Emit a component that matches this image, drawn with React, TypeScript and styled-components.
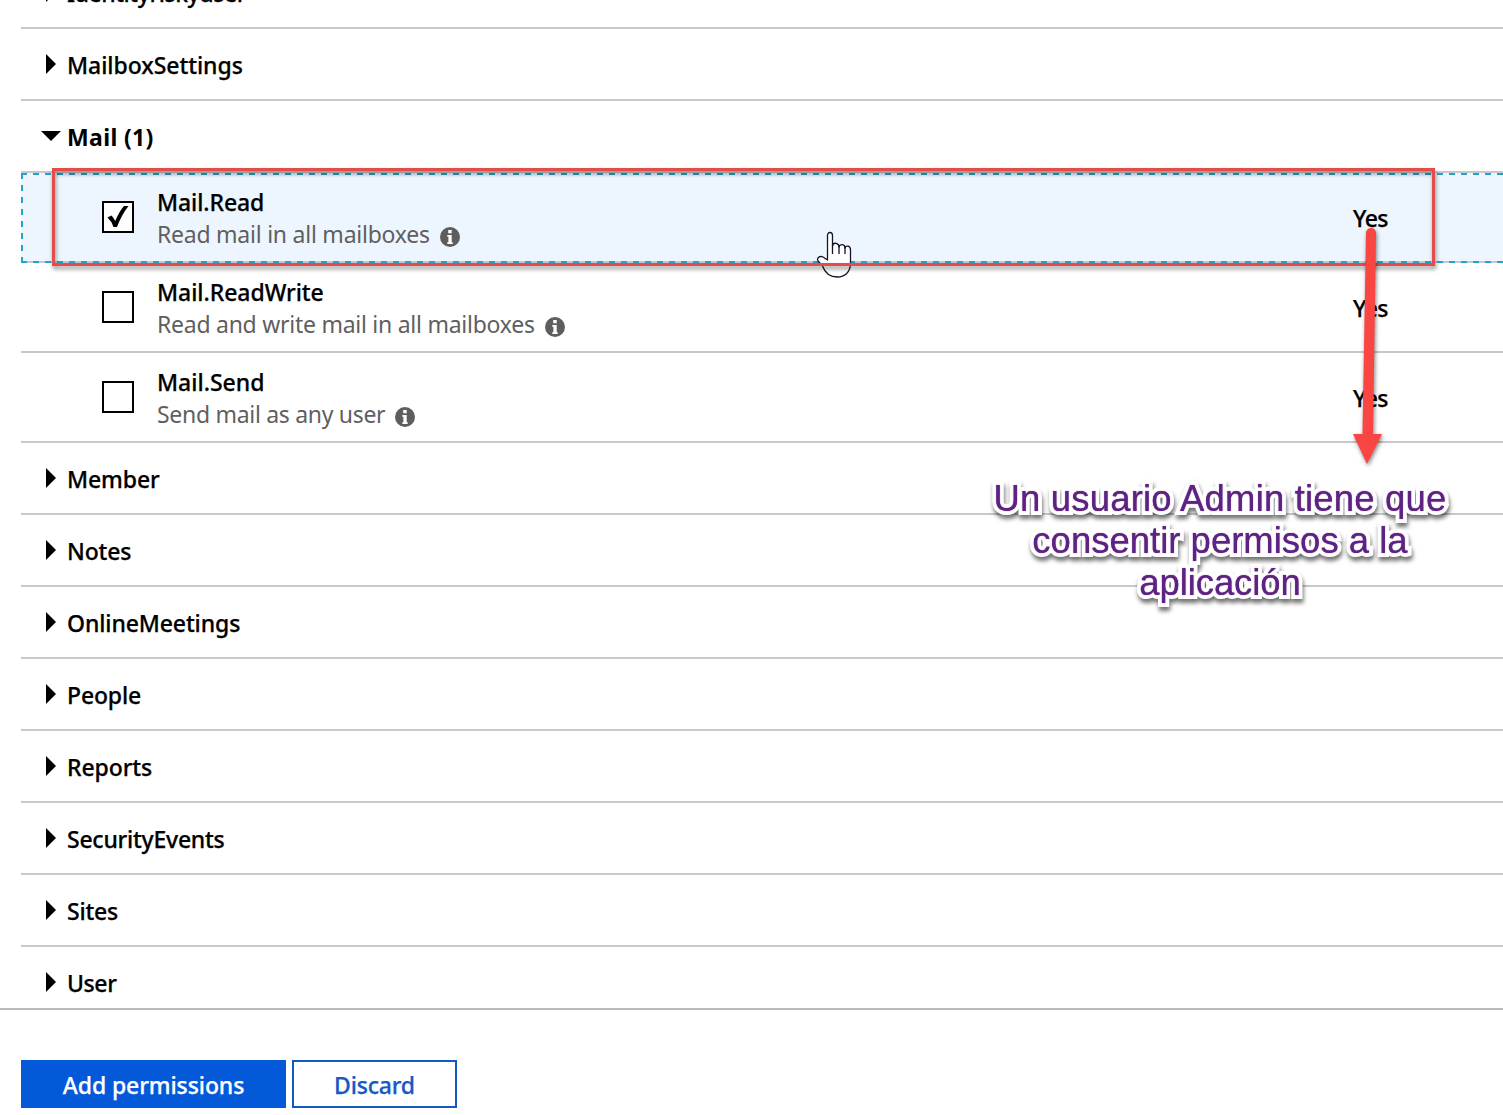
import React from "react";
import styled, { createGlobalStyle } from "styled-components";

const GlobalStyle = createGlobalStyle`
  * { box-sizing: border-box; }
  body {
    margin: 0;
    background: #fff;
    color: #000;
    font: 500 23px/32px "Noto Sans", "Open Sans", sans-serif;
    overflow: hidden;
  }
`;

const Page = styled.main`
  position: relative;
  display: flex;
  flex-direction: column;
  width: 1503px;
  height: 1115px;
  overflow: hidden;
`;

const PermissionList = styled.section`
  display: flex;
  flex-direction: column;
  height: 1008px;
  padding-left: 21px;
  overflow: hidden;
`;

const Group = styled.div<{ $first?: boolean }>`
  display: flex;
  align-items: center;
  flex: none;
  height: 72px;
  margin-top: ${(p) => (p.$first ? "-43px" : "0")};
  padding-top: 2px;
  border-bottom: 2px solid #c8c8c8;
`;

const ArrowSlot = styled.span`
  display: flex;
  justify-content: center;
  width: 20px;
  margin: 0 6px 3px 20px;
`;

const Arrow = styled.svg`
  display: block;
  fill: #000;
`;

const Label = styled.span<{ $spacing?: number; $bold?: boolean }>`
  font-weight: ${(p) => (p.$bold ? 700 : 500)};
  -webkit-text-stroke: ${(p) => (p.$bold ? 0 : 0.25)}px #000;
  letter-spacing: ${(p) => p.$spacing ?? 0}px;
  white-space: nowrap;
`;

const Permission = styled.div<{ $selected?: boolean }>`
  position: relative;
  display: flex;
  flex: none;
  height: 90px;
  padding-left: 81px;
  background: ${(p) => (p.$selected ? "#edf6ff" : "#fff")};
  border-bottom: 2px solid #c8c8c8;
`;

const FocusRing = styled.svg`
  position: absolute;
  left: 0;
  top: 0;
`;

const Checkbox = styled.span`
  display: flex;
  align-items: center;
  justify-content: center;
  width: 32px;
  height: 32px;
  margin: 28px 23px 0 0;
  border: 2.5px solid #000;
  background: #fff;
`;

const Details = styled.div`
  display: flex;
  flex-direction: column;
  width: 1196px;
  padding-top: 13px;
`;

const Description = styled.div<{ $spacing: number }>`
  display: flex;
  align-items: center;
  gap: 10px;
  color: #5f5f5f;
  font-weight: 400;
  letter-spacing: ${(p) => p.$spacing}px;
  white-space: nowrap;
`;

const InfoIcon = styled.svg`
  margin-top: 6px;
`;

const Consent = styled.span`
  padding-top: 29px;
  letter-spacing: -0.6px;
  -webkit-text-stroke: 0.25px #000;
`;

const Footer = styled.footer`
  display: flex;
  gap: 6px;
  height: 107px;
  padding: 50px 21px 0;
  border-top: 2px solid #b9b9b9;
`;

const Button = styled.button<{ $primary?: boolean }>`
  width: ${(p) => (p.$primary ? 265 : 165)}px;
  height: 48px;
  padding: 2px 0 0;
  border: 2px solid ${(p) => (p.$primary ? "#0459d9" : "#1259c0")};
  background: ${(p) => (p.$primary ? "#0459d9" : "#fff")};
  color: ${(p) => (p.$primary ? "#fff" : "#1658c4")};
  font: inherit;
  -webkit-text-stroke: 0.25px currentColor;
  letter-spacing: ${(p) => (p.$primary ? -0.1 : -0.2)}px;
`;

const Highlight = styled.div`
  position: absolute;
  left: 52px;
  top: 168px;
  width: 1383px;
  height: 98px;
  border: 3px solid #e44b4b;
  filter: drop-shadow(1px 3px 2px rgba(0, 0, 0, 0.45));
`;

const Pointer = styled.svg`
  position: absolute;
  left: 815px;
  top: 230px;
`;

const CalloutArrow = styled.svg`
  position: absolute;
  left: 1340px;
  top: 220px;
  filter: drop-shadow(1px 2px 2px rgba(0, 0, 0, 0.5));
`;

const Callout = styled.div`
  position: absolute;
  left: 970px;
  top: 478px;
  width: 500px;
  display: flex;
  flex-direction: column;
  align-items: center;
  filter: drop-shadow(1px 4px 2px rgba(0, 0, 0, 0.55));
`;

const CalloutLine = styled.span<{ $spacing: number }>`
  color: #5e2382;
  font: 400 36.500px/42px "Liberation Sans", Arial, sans-serif;
  -webkit-text-stroke: 8px #fff;
  paint-order: stroke fill;
  stroke-linejoin: round;
  letter-spacing: ${(p) => p.$spacing}px;
  text-shadow: 0 0 1px #5e2382;
  white-space: nowrap;
`;

function GroupRow({ name, spacing, first, open }: { name: string; spacing?: number; first?: boolean; open?: boolean }) {
  return (
    <Group $first={first}>
      <ArrowSlot>
        {open ? (
          <Arrow width="20" height="10" viewBox="0 0 20 10"><path d="M0 0H20L10 10Z" /></Arrow>
        ) : (
          <Arrow width="10" height="20" viewBox="0 0 10 20"><path d="M0 0L10 10L0 20Z" /></Arrow>
        )}
      </ArrowSlot>
      <Label $spacing={spacing} $bold={open}>{name}</Label>
    </Group>
  );
}

interface PermissionProps {
  name: string;
  text: string;
  nameSpacing: number;
  textSpacing: number;
  selected?: boolean;
}

function PermissionRow({ name, text, nameSpacing, textSpacing, selected }: PermissionProps) {
  return (
    <Permission $selected={selected}>
      {selected && (
        <FocusRing width="1500" height="90" fill="none" stroke="#22a3c9" strokeWidth="2" strokeDasharray="6 6">
          <path d="M0 1H1500M0 89H1500M1 0V90" />
        </FocusRing>
      )}
      <Checkbox>
        {selected && (
          <svg width="22" height="24" viewBox="0 0 22 24">
            <path d="M0.500 12.500L4.500 10.500Q6.500 12.500 8.200 16Q12.500 6 17 1H21.500Q14.500 10 10 22H6.500Q4.500 16 0.500 12.500Z" />
          </svg>
        )}
      </Checkbox>
      <Details>
        <Label $spacing={nameSpacing}>{name}</Label>
        <Description $spacing={textSpacing}>
          {text}
          <InfoIcon width="20" height="20" viewBox="0 0 20 20">
            <circle cx="10" cy="10" r="10" fill="#5e5e5e" />
            <path d="M8.200 3H11.700V6.200H8.200ZM7.300 8H11.700V15.300H12.700V17H7.300V15.300H8.400V9.700H7.300Z" fill="#fff" />
          </InfoIcon>
        </Description>
      </Details>
      <Consent>Yes</Consent>
    </Permission>
  );
}

export default function App() {
  return (
    <Page>
      <GlobalStyle />
      <PermissionList>
        <GroupRow first name="Identityriskyuser" spacing={-0.45} />
        <GroupRow name="MailboxSettings" spacing={-0.05} />
        <GroupRow open name="Mail (1)" spacing={0.35} />
        <PermissionRow selected name="Mail.Read" nameSpacing={-0.1} text="Read mail in all mailboxes" textSpacing={-0.24} />
        <PermissionRow name="Mail.ReadWrite" nameSpacing={-0.05} text="Read and write mail in all mailboxes" textSpacing={-0.26} />
        <PermissionRow name="Mail.Send" nameSpacing={0} text="Send mail as any user" textSpacing={-0.3} />
        <GroupRow name="Member" spacing={-0.1} />
        <GroupRow name="Notes" spacing={-0.15} />
        <GroupRow name="OnlineMeetings" spacing={-0.12} />
        <GroupRow name="People" spacing={-0.15} />
        <GroupRow name="Reports" spacing={-0.1} />
        <GroupRow name="SecurityEvents" spacing={-0.25} />
        <GroupRow name="Sites" spacing={-0.2} />
        <GroupRow name="User" spacing={-0.4} />
      </PermissionList>
      <Footer>
        <Button $primary>Add permissions</Button>
        <Button>Discard</Button>
      </Footer>
      <Pointer width="40" height="50" viewBox="0 0 40 50">
        <path
          d="M12.500 28V5.500C12.500 1.500 17.500 1.500 17.500 5.500V16C18 12 24 12.500 24 17C25 13.500 30 14 30 18C31 15 35.500 15.500 35.500 20V33C35.500 43 29 47 22.500 47C15 47 10 43 7.500 36L3 31C1.500 28 4.500 25.500 8 27L12.500 30Z"
          fill="#fff" stroke="#151527" strokeWidth="1.300" strokeLinejoin="round"
        />
        <path d="M17.500 15V24M24 16V24M30 17V24" fill="none" stroke="#151527" strokeWidth="1.300" />
      </Pointer>
      <Highlight />
      <CalloutArrow width="60" height="250" viewBox="0 0 60 250">
        <path d="M26 13A5 5 0 0 1 36 13L33 214H42L27 244L13 214H22.500Z" fill="#f94643" />
      </CalloutArrow>
      <Callout>
        <CalloutLine $spacing={0.18}>Un usuario Admin tiene que</CalloutLine>
        <CalloutLine $spacing={0}>consentir permisos a la</CalloutLine>
        <CalloutLine $spacing={-0.1}>aplicación</CalloutLine>
      </Callout>
    </Page>
  );
}
